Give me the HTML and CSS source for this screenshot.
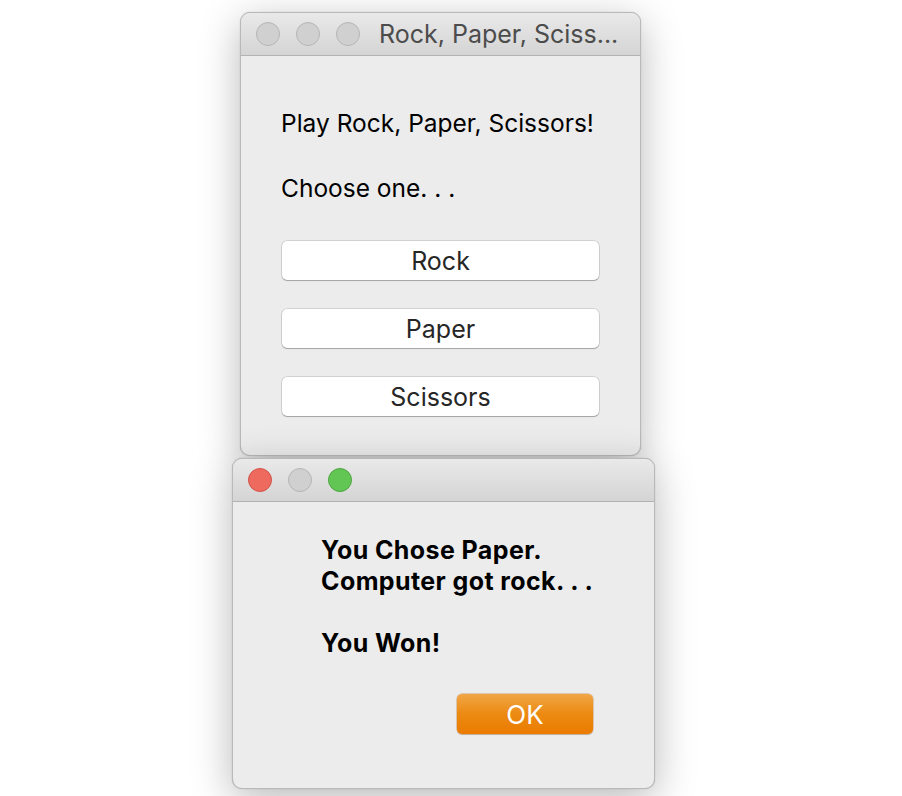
FILE: index.html
```html
<!DOCTYPE html>
<html>
<head>
<meta charset="utf-8">
<link rel="stylesheet" href="styles.css">
</head>
<body>
<div class="desktop">
  <div class="window main-win">
    <div class="titlebar">
      <div class="lights">
        <span class="light"></span>
        <span class="light"></span>
        <span class="light"></span>
      </div>
      <div class="title">Rock, Paper, Sciss...</div>
    </div>
    <div class="content">
      <p class="label first">Play Rock, Paper, Scissors!</p>
      <p class="label second">Choose one. . .</p>
      <div class="buttons">
        <button class="btn">Rock</button>
        <button class="btn">Paper</button>
        <button class="btn">Scissors</button>
      </div>
    </div>
  </div>
  <div class="window dialog-win">
    <div class="titlebar">
      <div class="lights">
        <span class="light red"></span>
        <span class="light"></span>
        <span class="light green"></span>
      </div>
    </div>
    <div class="dialog-content">
      <div class="msg">You Chose Paper.<br>Computer got rock. . .<br><br>You Won!</div>
      <div class="ok-row"><button class="ok">OK</button></div>
    </div>
  </div>
</div>
</body>
</html>
```
FILE: styles.css
```css
html, body {
  margin: 0;
  padding: 0;
  background: #ffffff;
}
body {
  font-family: Inter, "Liberation Sans", sans-serif;
  width: 902px;
  height: 796px;
  overflow: hidden;
}
.desktop {
  position: relative;
  width: 902px;
  height: 796px;
}
.window {
  position: absolute;
  background: #ececec;
  border: 1px solid #b9b9b9;
  border-radius: 10px;
  box-shadow: 0 10px 40px rgba(0,0,0,0.28), 0 0 1px rgba(0,0,0,0.3);
  overflow: hidden;
  box-sizing: border-box;
}
.main-win {
  left: 240px;
  top: 12px;
  width: 401px;
  height: 444px;
}
.dialog-win {
  left: 232px;
  top: 458px;
  width: 423px;
  height: 331px;
}
.titlebar {
  height: 43px;
  background: linear-gradient(#e9e9e9, #d4d4d4);
  border-bottom: 1px solid #b3b3b3;
  display: flex;
  align-items: center;
  box-sizing: border-box;
}
.lights {
  display: flex;
  gap: 16px;
  padding-left: 15px;
}
.light {
  width: 22px;
  height: 22px;
  border-radius: 50%;
  background: #d0d0d0;
  border: 1px solid #b5b5b5;
}
.light.red {
  background: #ee6a5e;
  border-color: #d2524a;
}
.light.green {
  background: #62c655;
  border-color: #4ea73f;
}
.title {
  margin-left: 19px;
  font-size: 25px;
  color: #4c4c4c;
}
.content {
  padding: 54px 40px 0 40px;
}
.label {
  margin: 0;
  font-size: 24.5px;
  color: #000;
  line-height: 26px;
}
.label.second {
  margin-top: 39px;
}
.buttons {
  margin-top: 40px;
  padding-left: 1px;
  display: flex;
  flex-direction: column;
  gap: 29px;
}
.btn {
  display: block;
  width: 317px;
  height: 39px;
  background: #ffffff;
  border: none;
  border-radius: 5px;
  box-shadow: 0 0 0 0.5px rgba(0,0,0,0.22), 0 1px 1px rgba(0,0,0,0.22);
  font-family: Inter, "Liberation Sans", sans-serif;
  font-size: 25px;
  color: #262626;
  padding: 0;
}
.dialog-content {
  padding: 33px 0 0 88px;
}
.msg {
  font-weight: bold;
  font-size: 25px;
  letter-spacing: 0.4px;
  line-height: 31px;
  color: #000;
}
.ok-row {
  margin-top: 35px;
  padding-left: 136px;
}
.ok {
  width: 136px;
  height: 40px;
  border: none;
  border-radius: 5px;
  background: linear-gradient(#f0a646, #ec8a12 50%, #eb7b00);
  box-shadow: 0 0 0 0.5px rgba(180,90,0,0.5), 0 1px 1px rgba(0,0,0,0.15);
  color: #ffffff;
  font-family: Inter, "Liberation Sans", sans-serif;
  font-size: 26px;
  padding: 0;
}
```
